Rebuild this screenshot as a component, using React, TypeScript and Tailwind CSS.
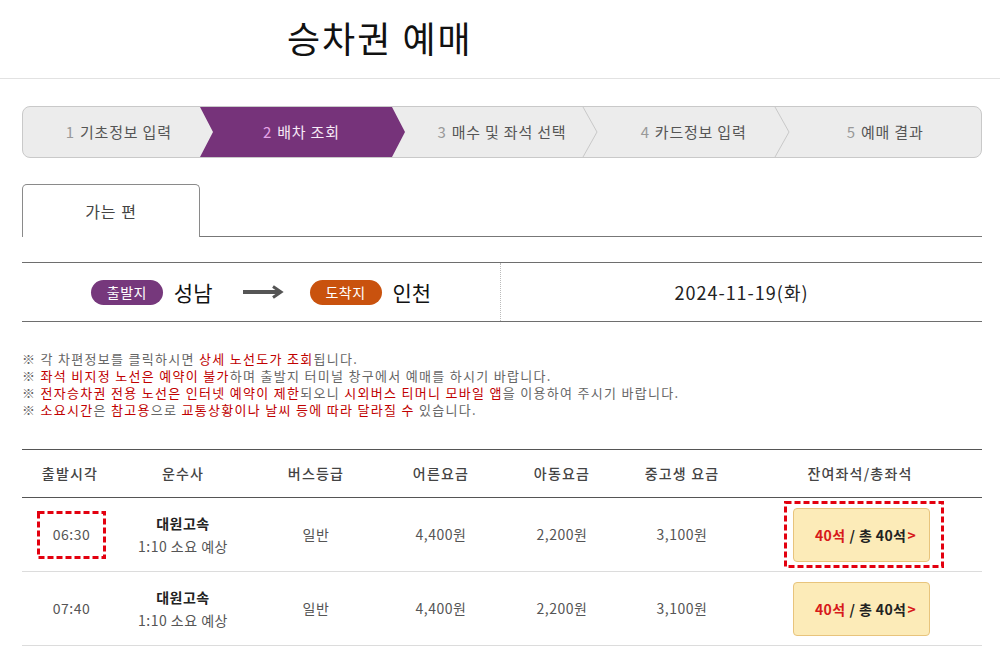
import React from "react";

const steps = [
  { n: "1", t: "기초정보 입력", active: false, pad: "" },
  { n: "2", t: "배차 조회", active: true, pad: "pr-[18px]" },
  { n: "3", t: "매수 및 좌석 선택", active: false, pad: "" },
  { n: "4", t: "카드정보 입력", active: false, pad: "" },
  { n: "5", t: "예매 결과", active: false, pad: "" },
];

function DashBox({ w, h }: { w: number; h: number }) {
  return (
    <svg className="absolute left-0 top-0 pointer-events-none" width={w} height={h}>
      <rect x={1.5} y={1.5} width={w - 3} height={h - 3} fill="none" stroke="#e3000f" strokeWidth={3} strokeDasharray="6 3" />
    </svg>
  );
}

function SeatButton({ highlight }: { highlight: boolean }) {
  return (
    <div className="relative w-[160px] h-[67px]">
      {highlight && <DashBox w={160} h={67} />}
      <div className="absolute left-[9px] top-[7px] w-[137px] h-[54px] rounded-[4px] border border-[#e8c47c] bg-[#fcebb8] flex items-center justify-center pl-[8px] text-[14px] font-bold leading-none tracking-[0.4px]">
        <span className="text-[#d71a1a]">40석</span>
        <span className="text-[#222] ml-[4px]">/ 총 40석</span>
        <span className="text-[#d71a1a] ml-[1px]">&gt;</span>
      </div>
    </div>
  );
}

function Row({ time, highlight }: { time: string; highlight: boolean }) {
  return (
    <div className="grid grid-cols-[96px_130px_136px_114px_128px_112px_1fr] h-[74px] border-b border-[#dcdcdc] items-center text-[14px] text-[#555] tracking-[0.5px]">
      <div className="flex justify-center">
        <div className="relative w-[69px] h-[48px] flex items-center justify-center ml-[3px]">
          {highlight && <DashBox w={69} h={48} />}
          <span>{time}</span>
        </div>
      </div>
      <div className="flex flex-col items-center leading-[23px]">
        <span className="font-bold text-[#222]">대원고속</span>
        <span>1:10 소요 예상</span>
      </div>
      <div className="text-center">일반</div>
      <div className="text-center">4,400원</div>
      <div className="text-center">2,200원</div>
      <div className="text-center">3,100원</div>
      <div className="pl-[46px] tracking-normal">
        <SeatButton highlight={highlight} />
      </div>
    </div>
  );
}

const red = "text-[#c00000]";

export default function App() {
  return (
    <div className="w-[1000px] h-[647px] overflow-hidden bg-white font-['Noto_Sans_CJK_KR',sans-serif] text-[#333]">
      <div className="h-[79px] border-b border-[#e2e2e2] flex items-center pl-[287px]">
        <h1 className="text-[36px] font-normal text-[#111] leading-none tracking-[2px] -mt-[4px]">승차권 예매</h1>
      </div>

      <div className="ml-[22px] w-[960px]">
        {/* Steps */}
        <div className="relative mt-[27px] h-[52px] rounded-[8px] border border-[#c9c9c9] bg-[#ececec] overflow-hidden">
          <svg className="absolute inset-0" width="958" height="50">
            <polygon points="177,0 369,0 382,25 369,50 177,50 190,25" fill="#76337a" />
            <polyline points="560,0 574,25 560,50" fill="none" stroke="#c8c8c8" strokeWidth="1" />
            <polyline points="752,0 766,25 752,50" fill="none" stroke="#c8c8c8" strokeWidth="1" />
          </svg>
          <div className="relative flex h-full">
            {steps.map((s) => (
              <div key={s.n} className={`w-[192px] flex items-center justify-center text-[15px] tracking-[0.8px] ${s.pad}`}>
                <span className={s.active ? "text-[#e5a3e6]" : "text-[#999]"}>{s.n}</span>
                <span className={`ml-[5px] ${s.active ? "text-[#f6eaf6]" : "text-[#555]"}`}>{s.t}</span>
              </div>
            ))}
          </div>
        </div>

        {/* Tab */}
        <div className="flex mt-[26px] h-[53px]">
          <div className="w-[178px] border border-b-0 border-[#8a8a8a] rounded-t-[5px] flex items-center justify-center text-[16px] text-[#444] tracking-[1px] pb-[1px]">
            가는 편
          </div>
          <div className="flex-1 border-b border-[#777]" />
        </div>

        {/* Route */}
        <div className="mt-[25px] h-[60px] border-t border-b border-[#6e6e6e] flex">
          <div className="w-[479px] flex items-center justify-center border-r border-dotted border-[#bbb]">
            <span className="w-[72px] h-[25px] rounded-full bg-[#76387c] text-white text-[14px] tracking-[0.5px] flex items-center justify-center">출발지</span>
            <span className="ml-[11px] text-[21px] text-[#111] leading-none">성남</span>
            <svg className="ml-[30px]" width="41" height="14" viewBox="0 0 41 14">
              <line x1="0" y1="7" x2="37" y2="7" stroke="#555" strokeWidth="4" />
              <polyline points="30,1.5 38,7 30,12.5" fill="none" stroke="#555" strokeWidth="3" />
            </svg>
            <span className="ml-[26px] w-[72px] h-[25px] rounded-full bg-[#c9520e] text-white text-[14px] tracking-[0.5px] flex items-center justify-center">도착지</span>
            <span className="ml-[11px] text-[21px] text-[#111] leading-none">인천</span>
          </div>
          <div className="flex-1 flex items-center justify-center text-[18px] tracking-[1px] text-[#222]">2024-11-19(화)</div>
        </div>

        {/* Notes */}
        <div className="mt-[28px] text-[13px] leading-[17px] tracking-[1.3px] text-[#666]">
          <p>※ 각 차편정보를 클릭하시면 <span className={red}>상세 노선도가 조회</span>됩니다.</p>
          <p>※ <span className={red}>좌석 비지정 노선은 예약이 불가</span>하며 출발지 터미널 창구에서 예매를 하시기 바랍니다.</p>
          <p>※ <span className={red}>전자승차권 전용 노선은 인터넷 예약이 제한</span>되오니 <span className={red}>시외버스 티머니 모바일 앱</span>을 이용하여 주시기 바랍니다.</p>
          <p>※ <span className={red}>소요시간</span>은 <span className={red}>참고용</span>으로 <span className={red}>교통상황이나 날씨 등에 따라 달라질 수</span> 있습니다.</p>
        </div>

        {/* Table */}
        <div className="mt-[31px] border-t border-[#555]">
          <div className="grid grid-cols-[96px_130px_136px_114px_128px_112px_1fr] h-[48px] border-b border-[#555] items-center text-[14px] font-medium text-[#444] tracking-[1.2px] text-center">
            <div>출발시각</div>
            <div>운수사</div>
            <div>버스등급</div>
            <div>어른요금</div>
            <div>아동요금</div>
            <div>중고생 요금</div>
            <div>잔여좌석/총좌석</div>
          </div>
          <Row time="06:30" highlight={true} />
          <Row time="07:40" highlight={false} />
        </div>
      </div>
    </div>
  );
}
